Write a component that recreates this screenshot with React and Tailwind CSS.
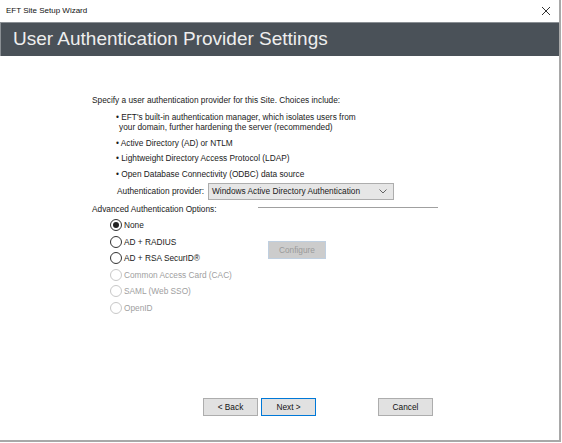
import React from "react";

const Radio = ({ label, checked, disabled }) => (
  <div className="flex items-center h-[16.5px]">
    <span
      className={`w-[12px] h-[12px] rounded-full border flex items-center justify-center bg-white ${
        disabled ? "border-[#c8c8c8]" : "border-[#333]"
      }`}
    >
      {checked && <span className="w-[6px] h-[6px] rounded-full bg-[#222]" />}
    </span>
    <span className={`ml-[2px] ${disabled ? "text-[#a0a0a0]" : "text-[#1a1a1a]"}`}>{label}</span>
  </div>
);

const Btn = ({ children, primary }) => (
  <button
    className={`w-[55px] h-[18px] bg-[#e1e1e1] text-[8.3px] text-[#111] border ${
      primary ? "border-[#0078d7]" : "border-[#adadad]"
    }`}
  >
    {children}
  </button>
);

export default function App() {
  return (
    <div
      className="w-[562px] h-[443px] bg-white"
      style={{ fontFamily: "'Liberation Sans', Arial, sans-serif" }}
    >
      <div className="w-[561px] h-[442px] border-r-2 border-b-2 border-[#a8a8a8] flex flex-col">
        {/* Title bar */}
        <div className="h-[22px] flex items-center justify-between pl-[6px] pr-[8px]">
          <span className="text-[8px] text-[#111]">EFT Site Setup Wizard</span>
          <svg width="10" height="10" viewBox="0 0 10 10">
            <path d="M1 1L9 9M9 1L1 9" stroke="#333" strokeWidth="1" />
          </svg>
        </div>

        {/* Header */}
        <div className="h-[34px] bg-[#4a5158] border-t border-l border-[#8a8f94] flex items-center pl-[12px]">
          <span className="text-[19px] text-[#eeeeee]">User Authentication Provider Settings</span>
        </div>

        {/* Content */}
        <div className="flex-1 flex flex-col pl-[92px] text-[8.3px] text-[#1a1a1a]">
          <div className="mt-[39px] leading-[10px]">
            Specify a user authentication provider for this Site. Choices include:
          </div>
          <div className="pl-[24px] mt-[8px] flex flex-col gap-[5.5px]">
            <div className="leading-[9.5px]">
              • EFT's built-in authentication manager, which isolates users from
              <br />
              <span className="pl-[3px]">your domain, further hardening the server (recommended)</span>
            </div>
            <div className="leading-[10px]">• Active Directory (AD) or NTLM</div>
            <div className="leading-[10px]">• Lightweight Directory Access Protocol (LDAP)</div>
            <div className="leading-[10px]">• Open Database Connectivity (ODBC) data source</div>
          </div>
          <div className="flex items-center pl-[25px] mt-[4px]">
            <span className="w-[91px]">Authentication provider:</span>
            <div className="w-[186px] h-[17px] bg-[#e6e6e6] border border-[#adadad] flex items-center justify-between pl-[3px] pr-[6px]">
              <span>Windows Active Directory Authentication</span>
              <svg width="8" height="5" viewBox="0 0 8 5">
                <path d="M0.5 0.5L4 4L7.5 0.5" stroke="#555" fill="none" strokeWidth="0.9" />
              </svg>
            </div>
          </div>
          <div className="flex items-center mt-[4px] leading-[10px]">
            <span className="w-[166px]">Advanced Authentication Options:</span>
            <div className="w-[180px] h-px bg-[#a0a0a0] -mt-[2px]" />
          </div>
          <div className="flex mt-[3.5px]">
            <div className="flex flex-col pl-[18px] w-[176px]">
              <Radio label="None" checked />
              <Radio label="AD + RADIUS" />
              <Radio label="AD + RSA SecurID®" />
              <Radio label="Common Access Card (CAC)" disabled />
              <Radio label="SAML (Web SSO)" disabled />
              <Radio label="OpenID" disabled />
            </div>
            <div className="mt-[24px]">
              <button className="w-[58px] h-[18px] bg-[#cccccc] border border-[#bfcfe0] text-[8.3px] text-[#9a9a9a]">
                Configure
              </button>
            </div>
          </div>
          <div className="flex mt-auto mb-[24px] pl-[111px]">
            <Btn>&lt; Back</Btn>
            <div className="ml-[3px]">
              <Btn primary>Next &gt;</Btn>
            </div>
            <div className="ml-[62px]">
              <Btn>Cancel</Btn>
            </div>
          </div>
        </div>
      </div>
    </div>
  );
}
